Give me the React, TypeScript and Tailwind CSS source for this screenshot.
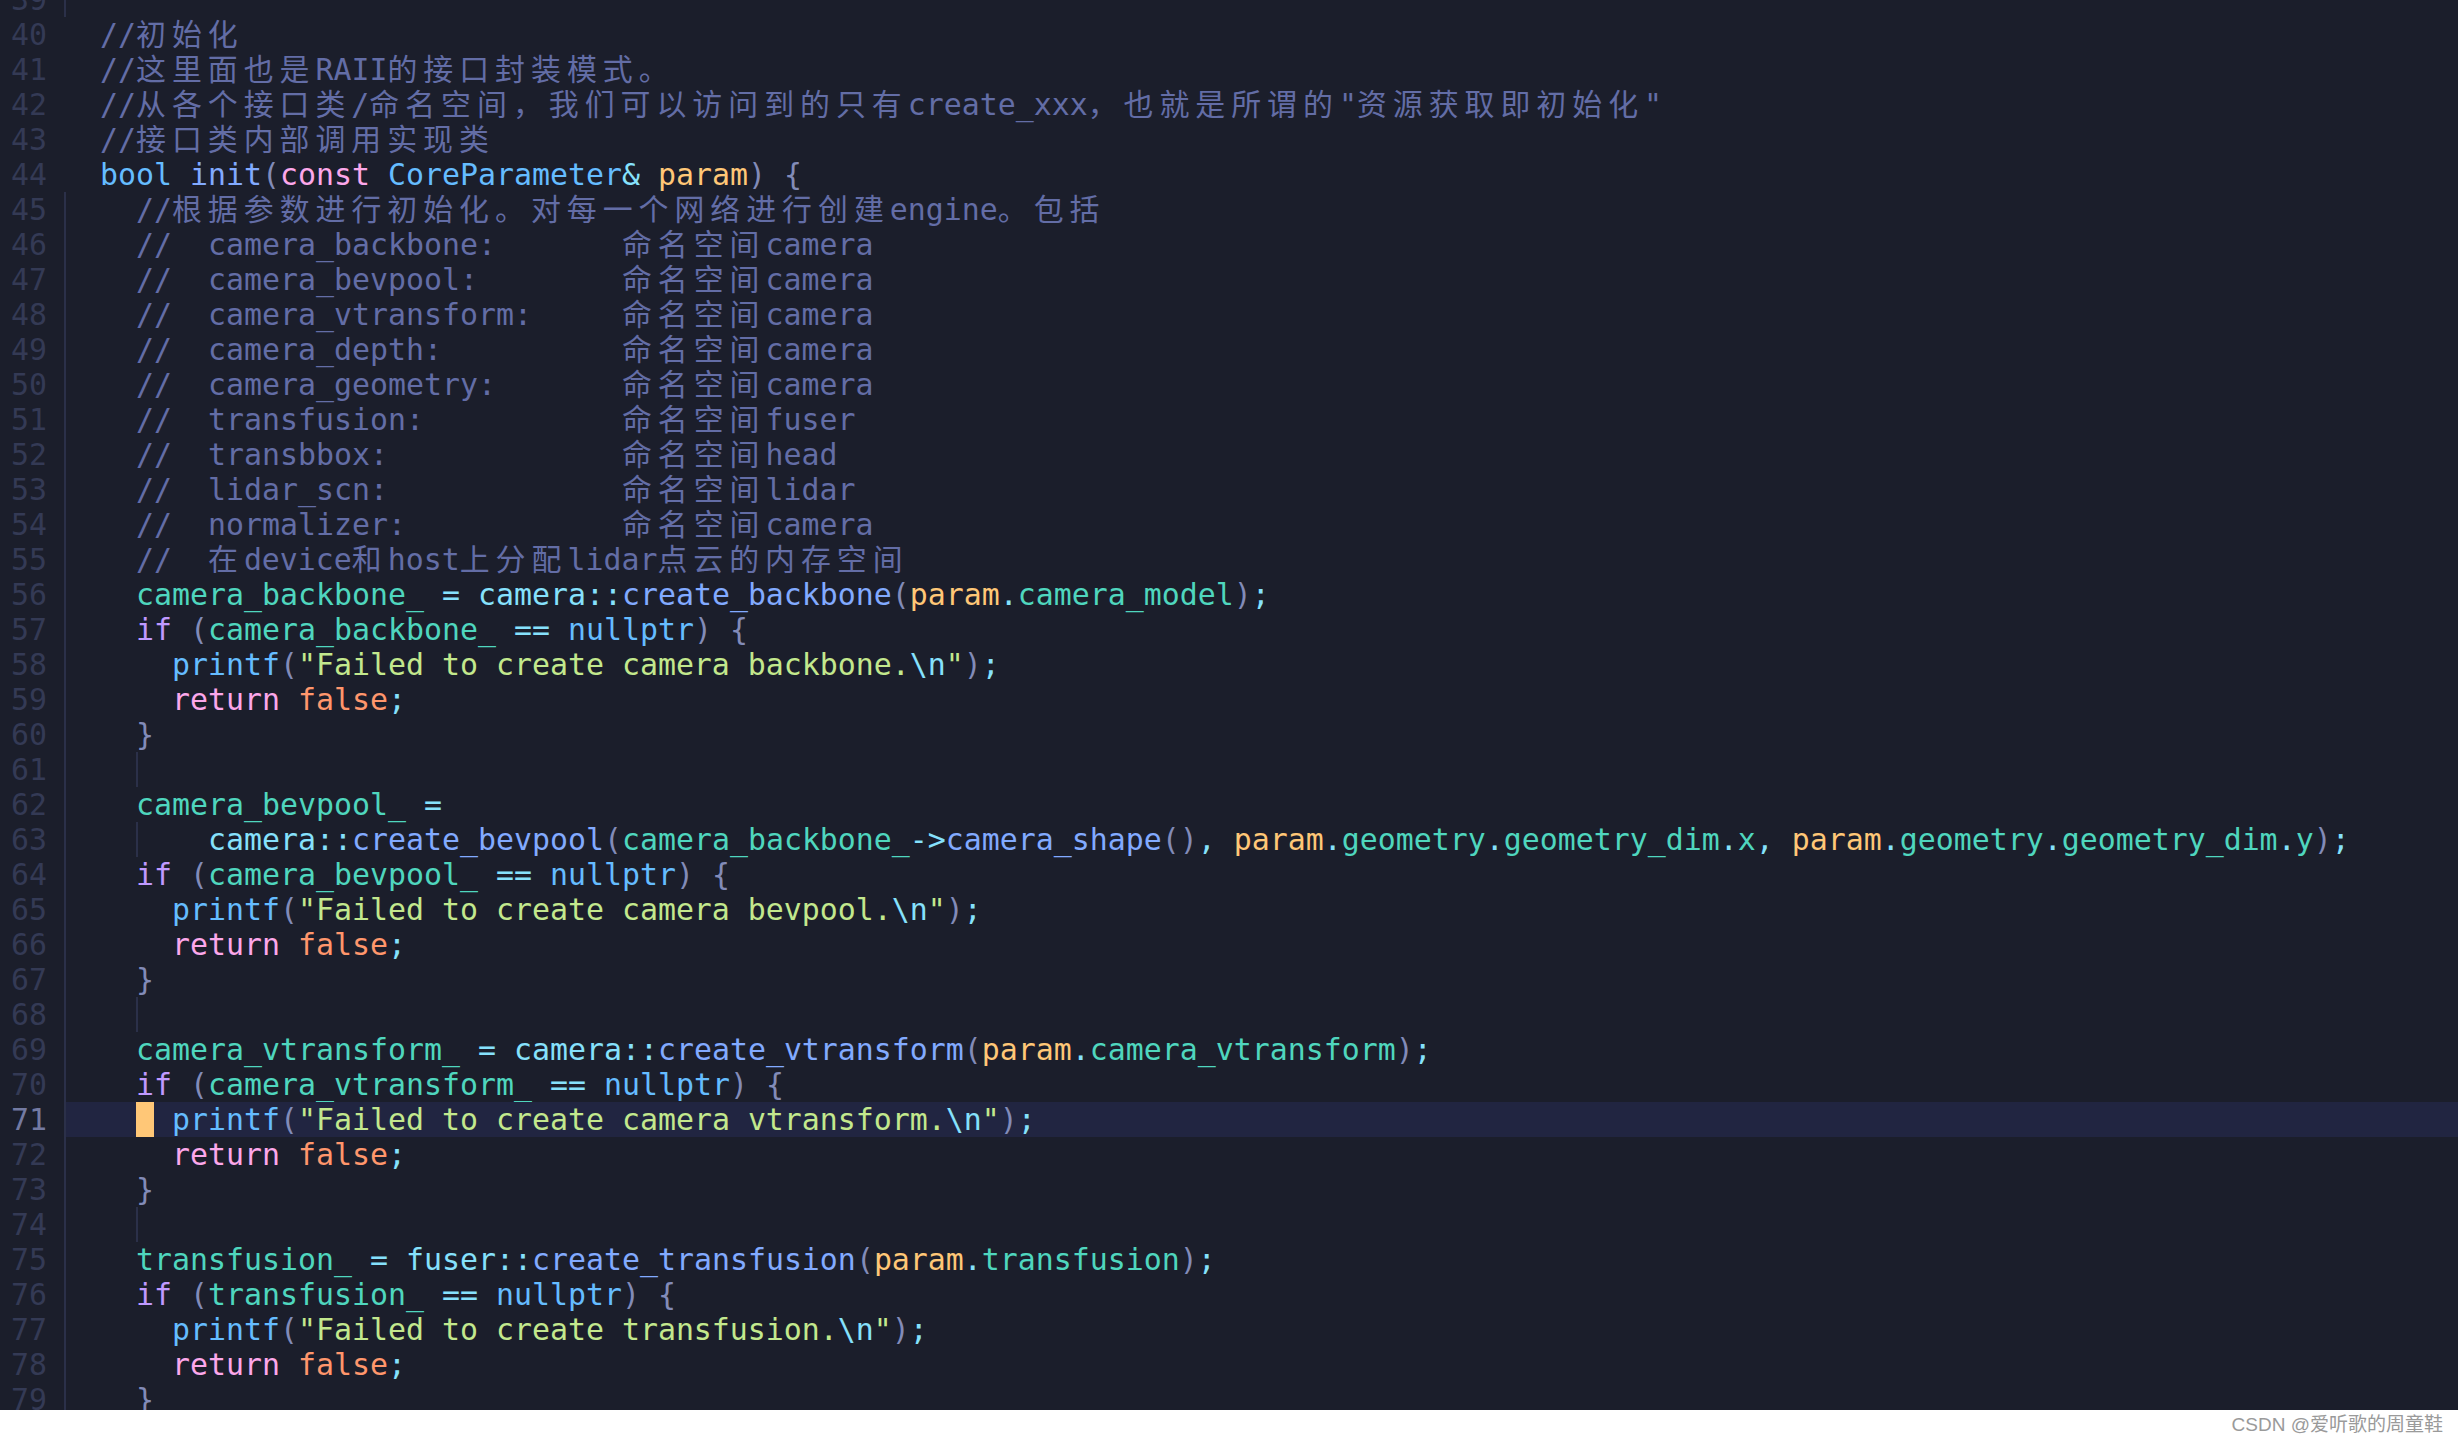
import React from 'react'

type Kind = 'cm' | 'v' | 'ns' | 'op' | 'fn' | 'bi' | 'p' | 's' | 'kw' | 'rt' | 'f' | 'pr' | ''
type Tok = [string, Kind]
type Lead = 'g2' | 'g2w' | 'cursor'
type Line = { n: number; guide?: boolean; lead?: Lead; toks: Tok[] }

const colors: Record<Kind, string> = {
  cm: 'text-[#636da6]',
  v: 'text-[#4fd6be]',
  ns: 'text-[#86e1fc]',
  op: 'text-[#86e1fc]',
  fn: 'text-[#82aaff]',
  bi: 'text-[#65bcff]',
  p: 'text-[#828bb8]',
  s: 'text-[#c3e88d]',
  kw: 'text-[#c099ff]',
  rt: 'text-[#fca7ea]',
  f: 'text-[#ff966c]',
  pr: 'text-[#ffc777]',
  '': '',
}

const CJK = /([\u3000-\u303f\u4e00-\u9fff\uff00-\uffef]+)/

// CJK glyphs take two columns in the editor, so widen them to 36px
const Txt = ({ t }: { t: string }) => (
  <>
    {t.split(CJK).map((s, i) =>
      i % 2 ? (
        <span key={i} className="tracking-[6px]">
          {s}
        </span>
      ) : (
        s
      )
    )}
  </>
)

const cm = (n: number, t: string, guide = true): Line => ({ n, guide, toks: [[t, 'cm']] })

const ifNull = (n: number, name: string): Line => ({
  n,
  guide: true,
  toks: [['  ', ''], ['if', 'kw'], [' (', 'p'], [name, 'v'], [' == ', 'op'], ['nullptr', 'bi'], [')', 'p'], [' {', 'p']],
})

const failed = (n: number, what: string, lead?: Lead): Line => ({
  n,
  guide: true,
  lead,
  toks: [
    [lead ? '' : '    ', ''],
    ['printf', 'bi'],
    ['(', 'p'],
    [`"Failed to create ${what}.`, 's'],
    ['\\n', 'op'],
    ['"', 's'],
    [')', 'p'],
    [';', 'op'],
  ],
})

const ret = (n: number): Line => ({
  n,
  guide: true,
  toks: [['    ', ''], ['return', 'rt'], [' ', ''], ['false', 'f'], [';', 'op']],
})

const close = (n: number): Line => ({ n, guide: true, toks: [['  ', ''], ['}', 'p']] })
const blank = (n: number): Line => ({ n, guide: true, lead: 'g2', toks: [] })

const lines: Line[] = [
  { n: 39, guide: true, toks: [] },
  cm(40, '//初始化', false),
  cm(41, '//这里面也是RAII的接口封装模式。', false),
  cm(42, '//从各个接口类/命名空间，我们可以访问到的只有create_xxx，也就是所谓的"资源获取即初始化"', false),
  cm(43, '//接口类内部调用实现类', false),
  {
    n: 44,
    toks: [
      ['bool', 'bi'], [' ', ''], ['init', 'fn'], ['(', 'p'], ['const', 'rt'], [' ', ''],
      ['CoreParameter', 'bi'], ['&', 'op'], [' ', ''], ['param', 'pr'], [')', 'p'], [' {', 'p'],
    ],
  },
  cm(45, '  //根据参数进行初始化。对每一个网络进行创建engine。包括'),
  cm(46, '  //  camera_backbone:       命名空间camera'),
  cm(47, '  //  camera_bevpool:        命名空间camera'),
  cm(48, '  //  camera_vtransform:     命名空间camera'),
  cm(49, '  //  camera_depth:          命名空间camera'),
  cm(50, '  //  camera_geometry:       命名空间camera'),
  cm(51, '  //  transfusion:           命名空间fuser'),
  cm(52, '  //  transbbox:             命名空间head'),
  cm(53, '  //  lidar_scn:             命名空间lidar'),
  cm(54, '  //  normalizer:            命名空间camera'),
  cm(55, '  //  在device和host上分配lidar点云的内存空间'),
  {
    n: 56,
    guide: true,
    toks: [
      ['  ', ''], ['camera_backbone_', 'v'], [' = ', 'op'], ['camera::', 'ns'], ['create_backbone', 'fn'],
      ['(', 'p'], ['param', 'pr'], ['.', 'op'], ['camera_model', 'v'], [')', 'p'], [';', 'op'],
    ],
  },
  ifNull(57, 'camera_backbone_'),
  failed(58, 'camera backbone'),
  ret(59),
  close(60),
  blank(61),
  { n: 62, guide: true, toks: [['  ', ''], ['camera_bevpool_', 'v'], [' =', 'op']] },
  {
    n: 63,
    guide: true,
    lead: 'g2w',
    toks: [
      ['camera::', 'ns'], ['create_bevpool', 'fn'], ['(', 'p'], ['camera_backbone_', 'v'], ['->', 'op'],
      ['camera_shape', 'fn'], ['()', 'p'], [', ', 'op'],
      ['param', 'pr'], ['.', 'op'], ['geometry', 'v'], ['.', 'op'], ['geometry_dim', 'v'], ['.', 'op'], ['x', 'v'],
      [', ', 'op'],
      ['param', 'pr'], ['.', 'op'], ['geometry', 'v'], ['.', 'op'], ['geometry_dim', 'v'], ['.', 'op'], ['y', 'v'],
      [')', 'p'], [';', 'op'],
    ],
  },
  ifNull(64, 'camera_bevpool_'),
  failed(65, 'camera bevpool'),
  ret(66),
  close(67),
  blank(68),
  {
    n: 69,
    guide: true,
    toks: [
      ['  ', ''], ['camera_vtransform_', 'v'], [' = ', 'op'], ['camera::', 'ns'], ['create_vtransform', 'fn'],
      ['(', 'p'], ['param', 'pr'], ['.', 'op'], ['camera_vtransform', 'v'], [')', 'p'], [';', 'op'],
    ],
  },
  ifNull(70, 'camera_vtransform_'),
  failed(71, 'camera vtransform', 'cursor'),
  ret(72),
  close(73),
  blank(74),
  {
    n: 75,
    guide: true,
    toks: [
      ['  ', ''], ['transfusion_', 'v'], [' = ', 'op'], ['fuser::', 'ns'], ['create_transfusion', 'fn'],
      ['(', 'p'], ['param', 'pr'], ['.', 'op'], ['transfusion', 'v'], [')', 'p'], [';', 'op'],
    ],
  },
  ifNull(76, 'transfusion_'),
  failed(77, 'transfusion'),
  ret(78),
  close(79),
]

const ACTIVE = 71

const LeadBox = ({ lead }: { lead?: Lead }) => {
  if (lead === 'g2') {
    return (
      <>
        <div className="w-[36px] shrink-0" />
        <div className="w-[2px] shrink-0 bg-[#2b3049]" />
      </>
    )
  }
  if (lead === 'g2w') {
    return (
      <>
        <div className="w-[36px] shrink-0" />
        <div className="w-[72px] shrink-0 border-l-2 border-[#2b3049]" />
      </>
    )
  }
  if (lead === 'cursor') {
    return (
      <>
        <div className="w-[36px] shrink-0" />
        <div className="w-[18px] shrink-0 bg-[#ffc777]" />
        <div className="w-[18px] shrink-0" />
      </>
    )
  }
  return null
}

const CodeLine = ({ line }: { line: Line }) => {
  const active = line.n === ACTIVE
  return (
    <div className="flex h-[35px] leading-[35px]">
      <div
        className={`w-[64px] shrink-0 pr-[17px] text-right ${active ? 'text-[#737aa2]' : 'text-[#343a55]'}`}
      >
        {line.n}
      </div>
      <div
        className={`flex flex-1 border-l-2 pl-[34px] ${line.guide ? 'border-[#2b3049]' : 'border-transparent'} ${active ? 'bg-[#212541]' : ''}`}
      >
        <LeadBox lead={line.lead} />
        <span className="whitespace-pre">
          {line.toks.map(([t, k], i) => (
            <span key={i} className={colors[k]}>
              <Txt t={t} />
            </span>
          ))}
        </span>
      </div>
    </div>
  )
}

export default function App() {
  return (
    <main className="flex h-[1440px] w-[2458px] flex-col bg-white">
      {/* EDITOR */}
      <section className="h-[1410px] shrink-0 overflow-hidden bg-[#1b1e2b] font-['DejaVu_Sans_Mono','Noto_Sans_CJK_SC',monospace] text-[29.9px]">
        <div className="mt-[-18px] flex flex-col">
          {lines.map((l) => (
            <CodeLine key={l.n} line={l} />
          ))}
        </div>
      </section>

      {/* WATERMARK */}
      <footer className="flex h-[30px] items-center justify-end pr-[15px] font-['Liberation_Sans','Noto_Sans_CJK_SC',sans-serif] text-[19px] text-[#9a9a9a]">
        CSDN @爱听歌的周童鞋
      </footer>
    </main>
  )
}
